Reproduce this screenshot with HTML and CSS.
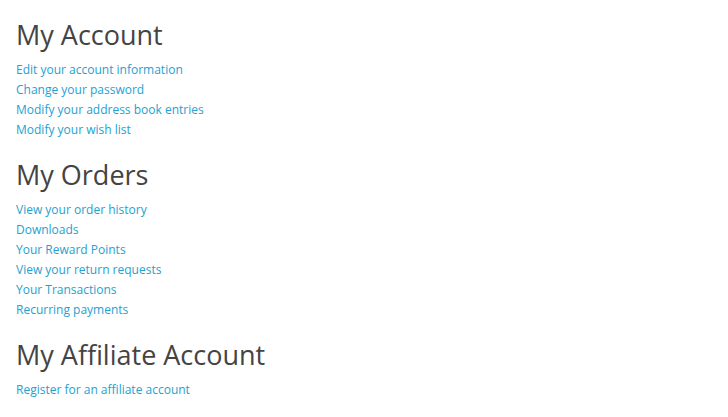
FILE: index.html
```html
<!DOCTYPE html>
<html>
<head>
<meta charset="utf-8">
<link rel="stylesheet" href="styles.css">
</head>
<body>
<div class="content">
  <h2 class="title">My Account</h2>
  <ul class="links">
    <li><a href="#">Edit your account information</a></li>
    <li><a href="#">Change your password</a></li>
    <li><a href="#">Modify your address book entries</a></li>
    <li><a href="#">Modify your wish list</a></li>
  </ul>
  <h2 class="title">My Orders</h2>
  <ul class="links">
    <li><a href="#">View your order history</a></li>
    <li><a href="#">Downloads</a></li>
    <li><a href="#">Your Reward Points</a></li>
    <li><a href="#">View your return requests</a></li>
    <li><a href="#">Your Transactions</a></li>
    <li><a href="#">Recurring payments</a></li>
  </ul>
  <h2 class="title">My Affiliate Account</h2>
  <ul class="links">
    <li><a href="#">Register for an affiliate account</a></li>
  </ul>
</div>
</body>
</html>
```
FILE: styles.css
```css
html, body {
  margin: 0;
  padding: 0;
  background: #ffffff;
}
body {
  font-family: "Open Sans", sans-serif;
  font-size: 12px;
  line-height: 20px;
  color: #666666;
}
.content {
  padding: 0 16px;
}
.title {
  font-family: "Open Sans", sans-serif;
  font-weight: 400;
  font-size: 27px;
  line-height: 30px;
  color: #444444;
  margin: 20px 0 10px 0;
}
.links {
  list-style: none;
  margin: 0 0 10px 0;
  padding: 0;
}
.links a {
  color: #23a1d1;
  text-decoration: none;
}
```
